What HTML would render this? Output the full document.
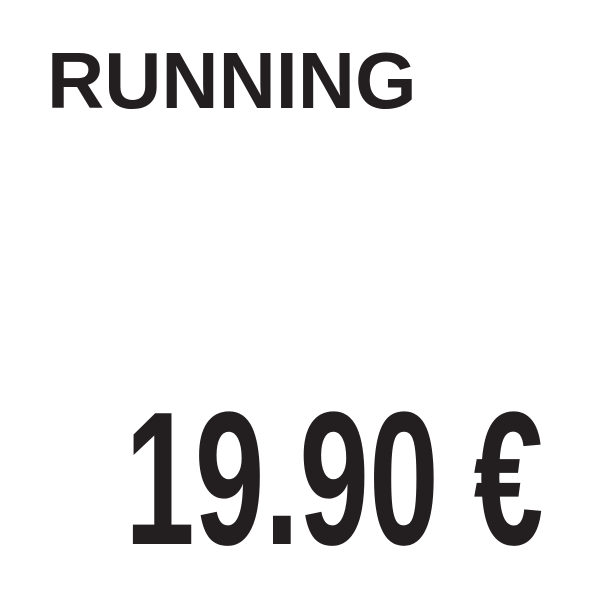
<!DOCTYPE html>
<html><head><style>
html,body{margin:0;padding:0;background:#fff;width:591px;height:591px;overflow:hidden;position:relative}
.t{position:absolute;font-family:"Liberation Sans",sans-serif;font-weight:bold;color:#231f20;line-height:1;white-space:nowrap;transform-origin:0 0}
</style></head><body>
<div class="t" style="left:47px;top:41px;font-size:80px;transform:scaleX(0.99)">RUNNING</div>
<div class="t" style="left:125px;top:384px;font-size:190px;transform:scaleX(0.66)">19.90 €</div>
</body></html>
